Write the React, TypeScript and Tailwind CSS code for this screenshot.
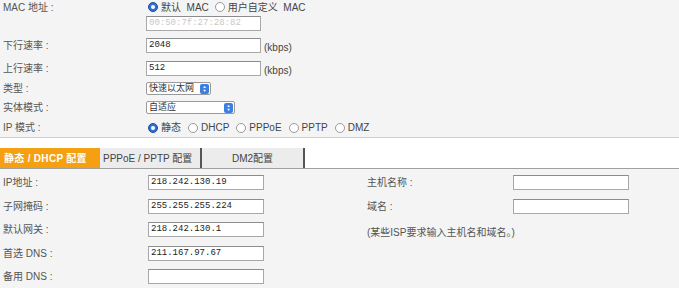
import type { ReactNode } from 'react'

const font = { fontFamily: '"Liberation Sans", "Noto Sans CJK SC", sans-serif' }

function Radio({ checked, label, gap = 'mr-[7px]' }: { checked?: boolean; label: string; gap?: string }) {
  return (
    <span className={`flex items-center gap-[3px] ${gap}`}>
      <span
        className={
          checked
            ? 'w-[10px] h-[10px] rounded-full bg-[#2f6fd6] border border-[#1f4f9f] flex items-center justify-center'
            : 'w-[10px] h-[10px] rounded-full bg-white border border-[#9a9a9a]'
        }
      >
        {checked && <span className="w-[4px] h-[4px] rounded-full bg-white" />}
      </span>
      <span className="whitespace-pre">{label}</span>
    </span>
  )
}

function Input({ value, width = 'w-[116px]', muted }: { value?: string; width?: string; muted?: boolean }) {
  return (
    <div
      className={`${width} h-[15px] bg-white border border-[#a8a8a8] border-t-[#8c8c8c] px-[2px] text-[9px] leading-[13px] ${muted ? 'text-[#c8c8c8]' : 'text-[#222]'}`}
      style={{ fontFamily: '"Liberation Mono", monospace' }}
    >
      {value}
    </div>
  )
}

function Select({ value, width }: { value: string; width: string }) {
  return (
    <div className={`${width} h-[13px] bg-white border border-[#9a9a9a] rounded-[2px] flex items-center justify-between pl-[2px] pr-[1px]`}>
      <span className="text-[9px] leading-none text-[#333]">{value}</span>
      <span className="w-[9px] h-[10px] rounded-[2px] bg-[#3d7fe0] flex flex-col items-center justify-center text-white text-[4px] leading-[4px]">
        <span>▲</span>
        <span>▼</span>
      </span>
    </div>
  )
}

function Row({ label, children, className = '' }: { label: string; children?: ReactNode; className?: string }) {
  return (
    <div className={`flex items-center ${className}`}>
      <div className="w-[146px] pl-[3px]">{label}</div>
      {children}
    </div>
  )
}

export default function App() {
  return (
    <main className="w-[679px] h-[288px] bg-[#f4f4f4] text-[10px] text-[#555] overflow-hidden" style={font}>
      <div className="border-b border-[#cfcfcf] pb-[3px]">
        <Row label="MAC 地址 :" className="h-[14px]">
          <div className="flex items-center pl-[2px] text-[#444]">
            <Radio checked label="默认  MAC" gap="mr-[6px]" />
            <Radio label="用户自定义  MAC" />
          </div>
        </Row>
        <Row label="" className="h-[14px] mt-[2px]">
          <Input value="00:50:7f:27:28:82" width="w-[115px]" muted />
        </Row>
        <Row label="下行速率 :" className="h-[15px] mt-[8px]">
          <Input value="2048" width="w-[115px]" />
          <span className="ml-[3px] mt-[4px] text-[#444]">(kbps)</span>
        </Row>
        <Row label="上行速率 :" className="h-[15px] mt-[8px]">
          <Input value="512" width="w-[115px]" />
          <span className="ml-[3px] mt-[4px] text-[#444]">(kbps)</span>
        </Row>
        <Row label="类型 :" className="h-[13px] mt-[6px]">
          <Select value="快速以太网" width="w-[65px]" />
        </Row>
        <Row label="实体模式 :" className="h-[13px] mt-[6px]">
          <Select value="自适应" width="w-[89px]" />
        </Row>
        <Row label="IP 模式 :" className="h-[13px] mt-[7px]">
          <div className="flex items-center pl-[2px] text-[#444]">
            <Radio checked label="静态" />
            <Radio label="DHCP" />
            <Radio label="PPPoE" />
            <Radio label="PPTP" />
            <Radio label="DMZ" />
          </div>
        </Row>
      </div>

      <div className="bg-white pt-[10px] border-b border-[#a0a0a0]">
        <div className="flex h-[20px] text-[10px]">
          <div className="w-[100px] bg-[#f5a010] text-white font-bold flex items-center pl-[4px] tracking-[0.3px]">静态 / DHCP 配置</div>
          <div className="w-[102px] bg-[#ececec] border-r-2 border-[#555] flex items-center pl-[3px] text-[#444]">PPPoE / PPTP 配置</div>
          <div className="w-[103px] bg-[#ececec] border-r-2 border-[#555] flex items-center justify-center text-[#444]">DM2配置</div>
        </div>
      </div>

      <div className="flex pt-[6px]">
        <div className="w-[367px] flex flex-col gap-[8.5px]">
          {[
            ['IP地址 :', '218.242.130.19'],
            ['子网掩码 :', '255.255.255.224'],
            ['默认网关 :', '218.242.130.1'],
            ['首选 DNS :', '211.167.97.67'],
            ['备用 DNS :', ''],
          ].map(([label, v]) => (
            <div key={label} className="flex items-center h-[15px]">
              <div className="w-[148px] pl-[3px]">{label}</div>
              <Input value={v} />
            </div>
          ))}
        </div>
        <div className="flex flex-col gap-[9px]">
          <div className="flex items-center h-[15px]">
            <div className="w-[146px]">主机名称 :</div>
            <Input />
          </div>
          <div className="flex items-center h-[15px]">
            <div className="w-[146px]">域名 :</div>
            <Input />
          </div>
          <div className="mt-[2px]">(某些ISP要求输入主机名和域名。)</div>
        </div>
      </div>
    </main>
  )
}
